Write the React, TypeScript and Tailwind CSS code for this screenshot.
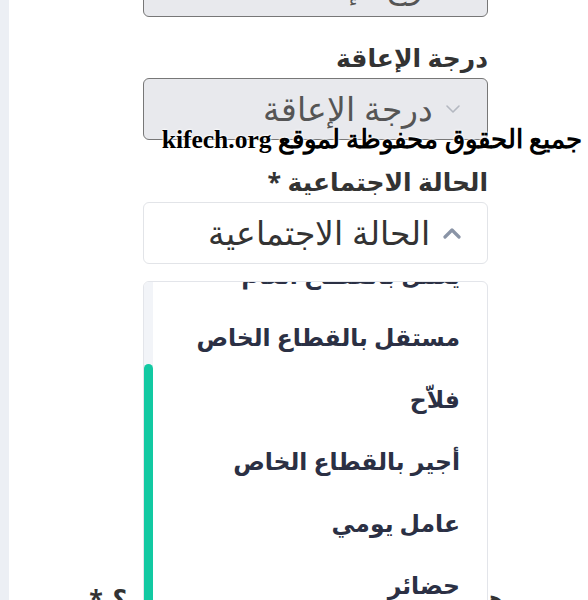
const options = [
  'يعمل بالقطاع العام',
  'مستقل بالقطاع الخاص',
  'فلاّح',
  'أجير بالقطاع الخاص',
  'عامل يومي',
  'حضائر',
  'عاطل عن العمل',
];

const font = "font-['Noto_Sans','DejaVu_Sans',sans-serif]";

function Caret({ up }: { up?: boolean }) {
  return up ? (
    <svg width="20" height="12" viewBox="0 0 20 12" className="shrink-0">
      <path d="M3 10 L10 3 L17 10" fill="none" stroke="#8a94a6" strokeWidth="3.2" strokeLinecap="round" strokeLinejoin="round" />
    </svg>
  ) : (
    <svg width="16" height="10" viewBox="0 0 16 10" className="shrink-0">
      <path d="M2 2 L8 8 L14 2" fill="none" stroke="#b4b8c1" strokeWidth="1.6" strokeLinecap="round" strokeLinejoin="round" />
    </svg>
  );
}

export default function App() {
  return (
    <div className={`flex h-[600px] overflow-hidden bg-white ${font}`}>
      {/* sidebar edge */}
      <div className="w-[9px] shrink-0 bg-[#eceff4]" />

      <div className="relative flex-1" dir="rtl">
        <div className="mr-[100px] w-[345px]">
          {/* previous field, scrolled mostly out of view */}
          <div className="-mt-[45px] flex h-[62px] items-center gap-[12px] rounded-md border border-[#777] bg-[#e8e9ed] pr-[26px] text-[33px] font-light text-[#555]">
            <Caret />
            <span>نوع الإعاقة</span>
          </div>

          {/* disability degree */}
          <div className="mt-[24px] mb-[5px] text-[25px] font-bold leading-[32px] text-[#333]">درجة الإعاقة</div>
          <div className="flex h-[62px] items-center gap-[12px] rounded-md border border-[#777] bg-[#e8e9ed] pr-[26px] text-[33px] font-light text-[#555]">
            <Caret />
            <span>درجة الإعاقة</span>
          </div>

          {/* social status */}
          <div className="mt-[25px] mb-[5px] text-[25px] font-bold leading-[32px] text-[#333]">الحالة الاجتماعية *</div>
          <div className="relative">
            <div className="flex h-[62px] items-center gap-[12px] rounded-md border border-[#e2e4e8] bg-white pr-[25px] text-[33px] font-light text-[#333]">
              <Caret up />
              <span>الحالة الاجتماعية</span>
            </div>

            {/* open dropdown */}
            <div className="absolute top-[79px] right-0 z-10 h-[360px] w-[345px] overflow-hidden rounded-t-md border border-[#e3e5ea] bg-white">
              <div className="-mt-[37px]">
                {options.map(o => (
                  <div key={o} className="flex h-[62px] items-center pr-[27px] text-[23.5px] font-bold text-[#2b3044]">
                    {o}
                  </div>
                ))}
              </div>
              <div className="absolute top-0 left-0 h-full w-[9px] bg-[#f2f4f8]">
                <div className="mt-[82px] h-[300px] w-[9px] rounded-t-full bg-[#12c9a2]" />
              </div>
            </div>
          </div>

          {/* fields hidden behind the dropdown */}
          <div className="mt-[26px] mb-[6px] text-[25px] font-bold leading-[32px] text-[#333]">الوضعية المهنية *</div>
          <div className="h-[62px] rounded-md border border-[#e2e4e8]" />
          <div className="mt-[26px] mb-[6px] text-[25px] font-bold leading-[32px] text-[#333]">عدد أفراد العائلة *</div>
          <div className="h-[62px] rounded-md border border-[#e2e4e8]" />
          <div className="-mr-[17px] mt-[66px] whitespace-nowrap text-[25px] font-bold leading-[32px] text-[#333] [word-spacing:3px]">
            هل تتحصل على منحة العائلات ؟ *
          </div>
        </div>

        {/* watermark */}
        <div
          dir="rtl"
          className="absolute top-[124px] right-[6px] z-20 whitespace-nowrap font-['Liberation_Serif','DejaVu_Serif',serif] text-[25.5px] font-bold leading-[32px] text-black [text-shadow:0_0_2px_#fff,0_0_2px_#fff,0_0_3px_#fff]"
        >
          جميع الحقوق محفوظة لموقع kifech.org
        </div>
      </div>
    </div>
  );
}
